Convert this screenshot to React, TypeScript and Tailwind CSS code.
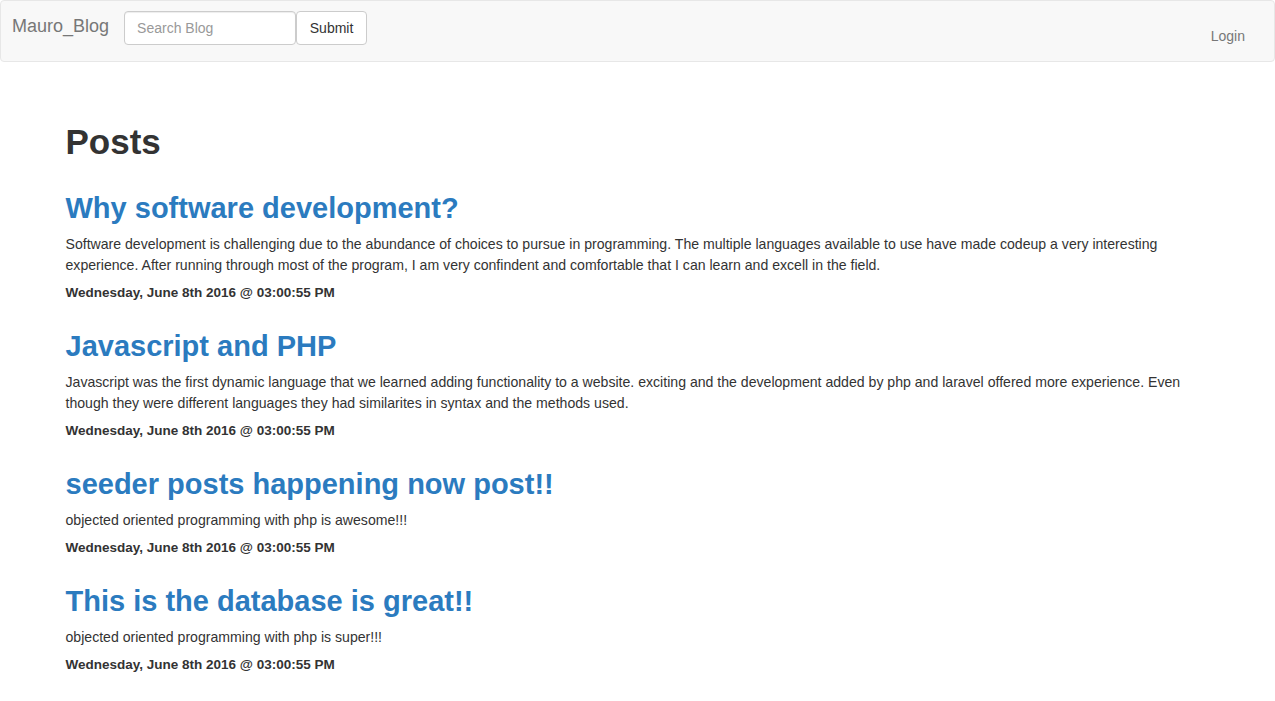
const posts = [
  {
    title: 'Why software development?',
    body: 'Software development is challenging due to the abundance of choices to pursue in programming. The multiple languages available to use have made codeup a very interesting experience. After running through most of the program, I am very confindent and comfortable that I can learn and excell in the field.',
  },
  {
    title: 'Javascript and PHP',
    body: 'Javascript was the first dynamic language that we learned adding functionality to a website. exciting and the development added by php and laravel offered more experience. Even though they were different languages they had similarites in syntax and the methods used.',
  },
  {
    title: 'seeder posts happening now post!!',
    body: 'objected oriented programming with php is awesome!!!',
  },
  {
    title: 'This is the database is great!!',
    body: 'objected oriented programming with php is super!!!',
  },
];

export default function App() {
  return (
    <div className="min-h-screen bg-white text-[#333] font-['Liberation_Sans',Arial,sans-serif]">
      {/* Navbar */}
      <nav className="h-[62px] flex items-start bg-[#f8f8f8] border border-[#e7e7e7] rounded-[4px]">
        <a className="ml-[11px] mt-[15px] text-[18px] leading-[20px] text-[#777]">Mauro_Blog</a>
        <form className="ml-[15px] mt-[10px] flex" onSubmit={e => e.preventDefault()}>
          <input
            placeholder="Search Blog"
            className="w-[172px] h-[34px] px-[12px] text-[14px] border border-[#ccc] rounded-[4px] bg-white shadow-[inset_0_1px_1px_rgba(0,0,0,0.075)] placeholder:text-[#999] outline-none"
          />
          <button className="w-[71px] h-[34px] text-[14px] text-[#333] bg-white border border-[#ccc] rounded-[4px]">
            Submit
          </button>
        </form>
        <a className="ml-auto mr-[29px] mt-[25px] text-[14px] leading-[20px] text-[#777]">Login</a>
      </nav>

      {/* Content */}
      <main className="w-[1170px] mx-auto pl-[13px] pr-[15px]">
        <h1 className="mt-[60px] text-[35px] leading-[40px] font-bold">Posts</h1>
        <div className="mt-[30px] flex flex-col gap-[29px]">
          {posts.map(p => (
            <div key={p.title}>
              <h2 className="text-[29px] leading-[33px] font-bold text-[#2b7bbf]">{p.title}</h2>
              <p className="mt-[9px] text-[14.1px] leading-[21px]">{p.body}</p>
              <h5 className="mt-[9px] text-[13.5px] leading-[16px] font-bold">Wednesday, June 8th 2016 @ 03:00:55 PM</h5>
            </div>
          ))}
        </div>
      </main>
    </div>
  );
}
